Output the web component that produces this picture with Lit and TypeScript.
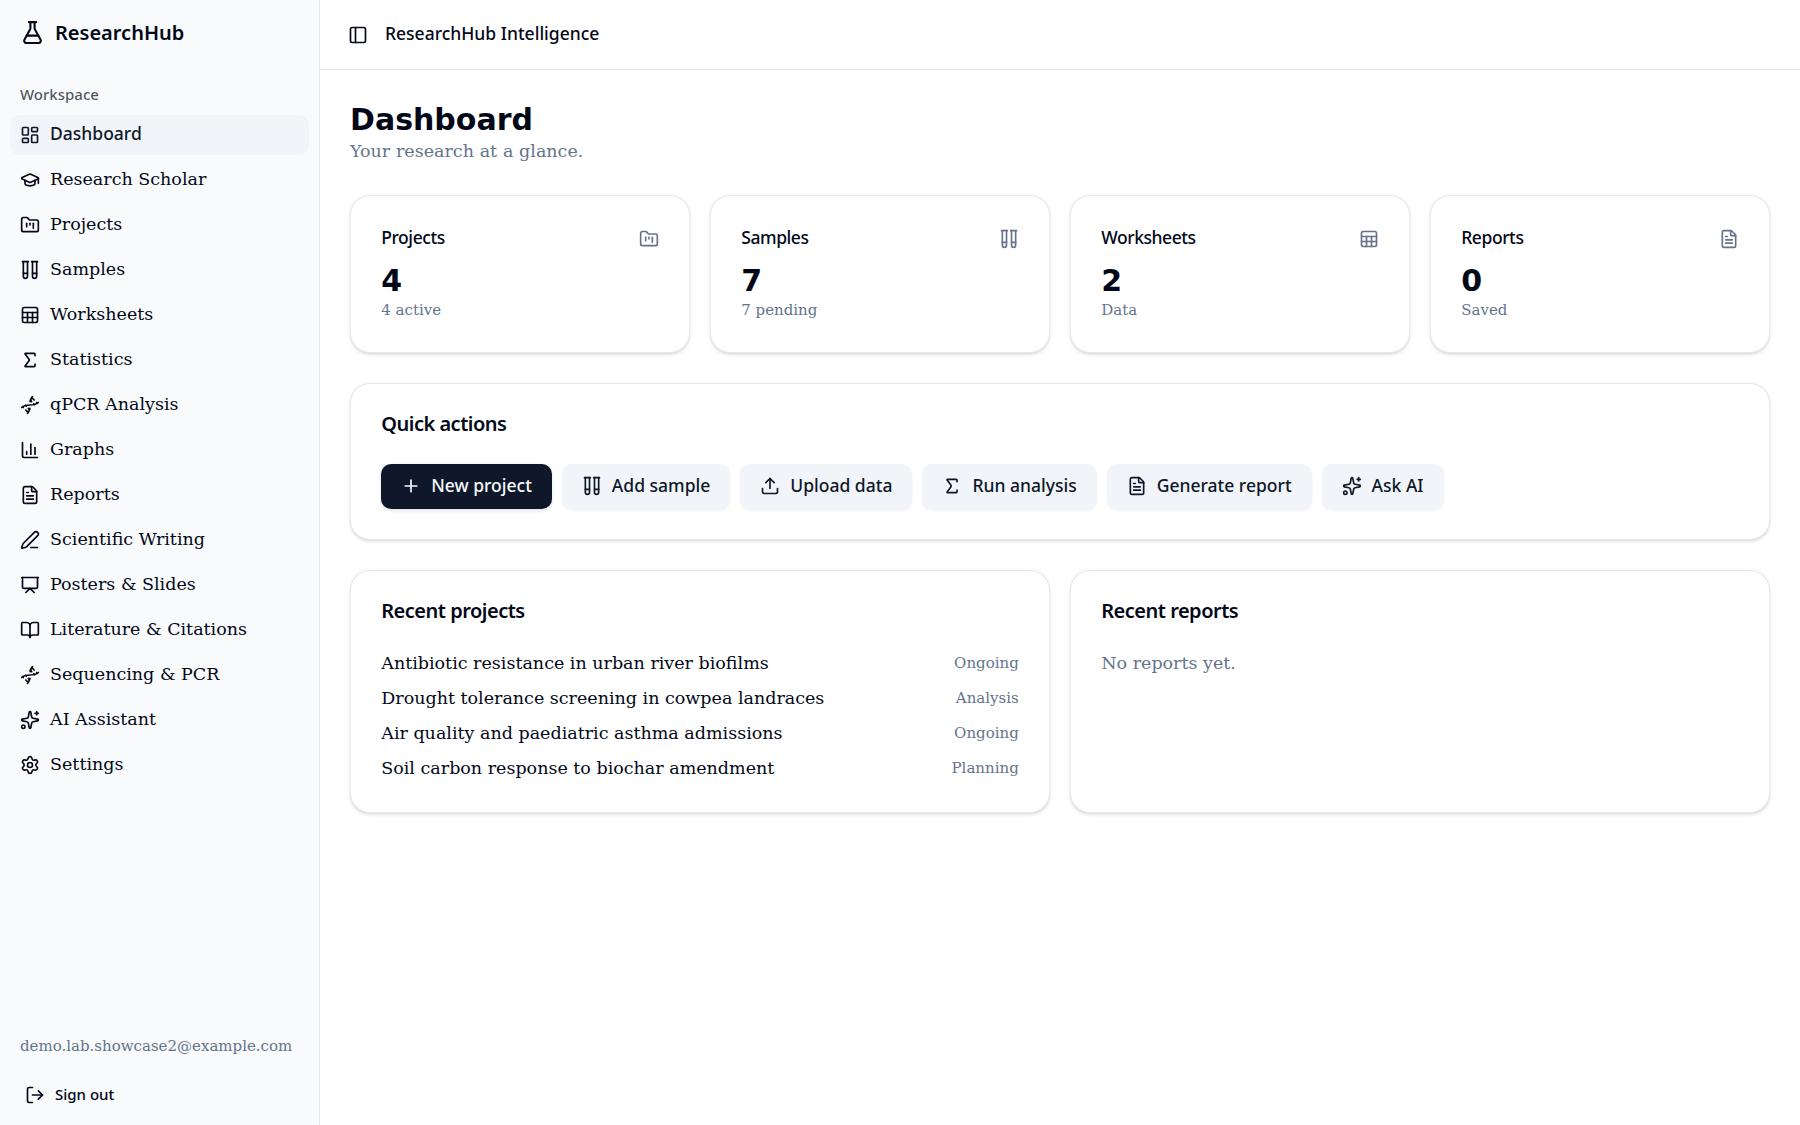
import { LitElement, html, css, svg } from "lit";
import { customElement, property } from "lit/decorators.js";

const p = (d: string) => svg`<path d=${d}></path>`;

const ICONS: Record<string, unknown> = {
  flask: [
    p("M14 2v6a2 2 0 0 0 .245.96l5.51 10.08A2 2 0 0 1 18 22H6a2 2 0 0 1-1.755-2.96l5.51-10.08A2 2 0 0 0 10 8V2"),
    p("M6.453 15h11.094"),
    p("M8.5 2h7"),
  ],
  dashboard: svg`<rect width="7" height="9" x="3" y="3" rx="1"></rect><rect width="7" height="5" x="14" y="3" rx="1"></rect><rect width="7" height="9" x="14" y="12" rx="1"></rect><rect width="7" height="5" x="3" y="16" rx="1"></rect>`,
  scholar: [
    p("M21.42 10.922a1 1 0 0 0-.019-1.838L12.83 5.18a2 2 0 0 0-1.66 0L2.6 9.08a1 1 0 0 0 0 1.832l8.57 3.908a2 2 0 0 0 1.66 0z"),
    p("M22 10v6"),
    p("M6 12.5V16a6 3 0 0 0 12 0v-3.5"),
  ],
  projects: [
    p("M4 20h16a2 2 0 0 0 2-2V8a2 2 0 0 0-2-2h-7.93a2 2 0 0 1-1.66-.9l-.82-1.2A2 2 0 0 0 7.93 3H4a2 2 0 0 0-2 2v13c0 1.1.9 2 2 2Z"),
    p("M8 10v4"),
    p("M12 10v2"),
    p("M16 10v6"),
  ],
  tubes: [
    p("M9 2v17.5A2.5 2.5 0 0 1 6.5 22A2.5 2.5 0 0 1 4 19.5V2"),
    p("M20 2v17.5a2.5 2.5 0 0 1-2.5 2.5a2.5 2.5 0 0 1-2.5-2.5V2"),
    p("M3 2h7"),
    p("M14 2h7"),
    p("M9 16H4"),
    p("M20 16h-5"),
  ],
  sheet: [
    svg`<rect width="18" height="18" x="3" y="3" rx="2"></rect>`,
    p("M3 9h18"),
    p("M3 15h18"),
    p("M9 9v12"),
    p("M15 9v12"),
  ],
  sigma: p("M18 7V5a1 1 0 0 0-1-1H6.5a.5.5 0 0 0-.4.8l4.5 6a2 2 0 0 1 0 2.4l-4.5 6a.5.5 0 0 0 .4.8H17a1 1 0 0 0 1-1v-2"),
  dna: [
    p("m10 16 1.5 1.5"),
    p("m14 8-1.5-1.5"),
    p("M15 2c-1.798 1.998-2.518 3.995-2.807 5.993"),
    p("m16.5 10.5 1 1"),
    p("m17 6-2.891-2.891"),
    p("M2 15c6.667-6 13.333 0 20-6"),
    p("m20 9 .891.891"),
    p("M3.109 14.109 4 15"),
    p("m6.5 12.5 1 1"),
    p("m7 18 2.891 2.891"),
    p("M9 22c1.798-1.998 2.518-3.995 2.807-5.993"),
  ],
  chart: [p("M3 3v16a2 2 0 0 0 2 2h16"), p("M18 17V9"), p("M13 17V5"), p("M8 17v-3")],
  file: [
    p("M6 22a2 2 0 0 1-2-2V4a2 2 0 0 1 2-2h8a2.4 2.4 0 0 1 1.704.706l3.588 3.588A2.4 2.4 0 0 1 20 8v12a2 2 0 0 1-2 2z"),
    p("M14 2v5a1 1 0 0 0 1 1h5"),
    p("M10 9H8"),
    p("M16 13H8"),
    p("M16 17H8"),
  ],
  pen: [
    p("M13 21h8"),
    p("M21.174 6.812a1 1 0 0 0-3.986-3.987L3.842 16.174a2 2 0 0 0-.5.83l-1.321 4.352a.5.5 0 0 0 .623.622l4.353-1.32a2 2 0 0 0 .83-.497z"),
  ],
  presentation: [p("M2 3h20"), p("M21 3v11a2 2 0 0 1-2 2H5a2 2 0 0 1-2-2V3"), p("m7 21 5-5 5 5")],
  book: [
    p("M12 7v14"),
    p("M3 18a1 1 0 0 1-1-1V4a1 1 0 0 1 1-1h5a4 4 0 0 1 4 4 4 4 0 0 1 4-4h5a1 1 0 0 1 1 1v13a1 1 0 0 1-1 1h-6a3 3 0 0 0-3 3 3 3 0 0 0-3-3z"),
  ],
  sparkles: [
    p("M11.017 2.814a1 1 0 0 1 1.966 0l1.051 5.558a2 2 0 0 0 1.594 1.594l5.558 1.051a1 1 0 0 1 0 1.966l-5.558 1.051a2 2 0 0 0-1.594 1.594l-1.051 5.558a1 1 0 0 1-1.966 0l-1.051-5.558a2 2 0 0 0-1.594-1.594l-5.558-1.051a1 1 0 0 1 0-1.966l5.558-1.051a2 2 0 0 0 1.594-1.594z"),
    p("M20 2v4"),
    p("M22 4h-4"),
    svg`<circle cx="4" cy="20" r="2"></circle>`,
  ],
  settings: [
    p("M9.671 4.136a2.34 2.34 0 0 1 4.659 0 2.34 2.34 0 0 0 3.319 1.915 2.34 2.34 0 0 1 2.33 4.033 2.34 2.34 0 0 0 0 3.831 2.34 2.34 0 0 1-2.33 4.033 2.34 2.34 0 0 0-3.319 1.915 2.34 2.34 0 0 1-4.659 0 2.34 2.34 0 0 0-3.32-1.915 2.34 2.34 0 0 1-2.33-4.033 2.34 2.34 0 0 0 0-3.831A2.34 2.34 0 0 1 6.35 6.051a2.34 2.34 0 0 0 3.319-1.915"),
    svg`<circle cx="12" cy="12" r="3"></circle>`,
  ],
  logout: [p("m16 17 5-5-5-5"), p("M21 12H9"), p("M9 21H5a2 2 0 0 1-2-2V5a2 2 0 0 1 2-2h4")],
  panel: [svg`<rect width="18" height="18" x="3" y="3" rx="2"></rect>`, p("M9 3v18")],
  plus: [p("M5 12h14"), p("M12 5v14")],
  upload: [p("M12 3v12"), p("m17 8-5-5-5 5"), p("M21 15v4a2 2 0 0 1-2 2H5a2 2 0 0 1-2-2v-4")],
};

@customElement("ui-icon")
class UiIcon extends LitElement {
  @property() name = "";
  static styles = css`
    :host {
      display: block;
      flex: none;
      width: 20px;
      height: 20px;
    }
    svg {
      display: block;
      width: 100%;
      height: 100%;
      fill: none;
      stroke: currentColor;
      stroke-width: 2;
      stroke-linecap: round;
      stroke-linejoin: round;
    }
  `;
  render() {
    return html`<svg viewBox="0 0 24 24" aria-hidden="true">${ICONS[this.name]}</svg>`;
  }
}

const NAV = [
  ["dashboard", "Dashboard"],
  ["scholar", "Research Scholar"],
  ["projects", "Projects"],
  ["tubes", "Samples"],
  ["sheet", "Worksheets"],
  ["sigma", "Statistics"],
  ["dna", "qPCR Analysis"],
  ["chart", "Graphs"],
  ["file", "Reports"],
  ["pen", "Scientific Writing"],
  ["presentation", "Posters & Slides"],
  ["book", "Literature & Citations"],
  ["dna", "Sequencing & PCR"],
  ["sparkles", "AI Assistant"],
  ["settings", "Settings"],
];

const STATS = [
  ["Projects", "projects", "4", "4 active"],
  ["Samples", "tubes", "7", "7 pending"],
  ["Worksheets", "sheet", "2", "Data"],
  ["Reports", "file", "0", "Saved"],
];

const ACTIONS = [
  ["plus", "New project"],
  ["tubes", "Add sample"],
  ["upload", "Upload data"],
  ["sigma", "Run analysis"],
  ["file", "Generate report"],
  ["sparkles", "Ask AI"],
];

const PROJECTS = [
  ["Antibiotic resistance in urban river biofilms", "Ongoing"],
  ["Drought tolerance screening in cowpea landraces", "Analysis"],
  ["Air quality and paediatric asthma admissions", "Ongoing"],
  ["Soil carbon response to biochar amendment", "Planning"],
];

@customElement("app-root")
class AppRoot extends LitElement {
  static styles = css`
    :host {
      --ui: "Noto Sans", sans-serif;
      --muted: #64748b;
      --line: #e2e8f0;
      display: flex;
      height: 1125px;
      background: #fff;
      color: #020817;
      font: 17.5px/25px "DejaVu Serif", serif;
    }
    * {
      box-sizing: border-box;
    }
    h1,
    h2,
    h3,
    p,
    ul {
      margin: 0;
      padding: 0;
      list-style: none;
    }
    button {
      border: 0;
      color: inherit;
      background: none;
      white-space: nowrap;
    }
    /* Optical centring: labels sit one pixel above the middle of their row. */
    .label {
      margin-top: -2px;
    }
    .sidebar {
      display: flex;
      flex-direction: column;
      flex: none;
      width: 320px;
      padding: 10px;
      background: #f8fafc;
      border-right: 1px solid var(--line);
    }
    .brand {
      display: flex;
      align-items: center;
      gap: 10px;
      height: 45px;
      padding: 0 10px;
      font: 600 20px/30px var(--ui);
    }
    .brand ui-icon {
      width: 25px;
      height: 25px;
    }
    .group {
      height: 40px;
      margin-top: 20px;
      padding: 0 10px;
      font: 500 15px/38px var(--ui);
      color: #020817b3;
    }
    .nav {
      display: flex;
      flex-direction: column;
      gap: 5px;
      flex: 1;
    }
    .item {
      display: flex;
      align-items: center;
      gap: 10px;
      height: 40px;
      padding: 0 10px;
      border-radius: 10px;
    }
    .item.active {
      background: #f1f5f9;
      color: #0f172a;
      font-family: var(--ui);
      font-weight: 500;
    }
    .item.active .label {
      margin-top: -4px;
    }
    .email {
      padding: 0 10px;
      margin-bottom: 19px;
      font-size: 15px;
      line-height: 20px;
      color: var(--muted);
    }
    .signout {
      display: flex;
      align-items: center;
      gap: 10px;
      height: 40px;
      padding: 0 15px;
      font: 500 15px/20px var(--ui);
    }
    .page {
      flex: 1;
      min-width: 0;
    }
    .topbar {
      display: flex;
      align-items: center;
      gap: 17.5px;
      height: 70px;
      padding: 0 27.5px;
      border-bottom: 1px solid var(--line);
      font: 500 17.5px/25px var(--ui);
    }
    .main {
      display: flex;
      flex-direction: column;
      gap: 30px;
      padding: 30px;
    }
    h1 {
      font: 700 30px/40px "DejaVu Sans", sans-serif;
    }
    .muted {
      color: var(--muted);
    }
    .lead {
      margin: -1px 0 1px;
      word-spacing: 0.2px;
    }
    .small {
      font-size: 15px;
      line-height: 20px;
      color: var(--muted);
    }
    .note {
      margin: -1px 0 1px;
    }
    .stats {
      display: grid;
      grid-template-columns: repeat(4, 1fr);
      gap: 20px;
    }
    .halves {
      display: grid;
      grid-template-columns: 1fr 1fr;
      gap: 20px;
    }
    .card {
      padding: 30.25px;
      background: #fff;
      border: 1px solid var(--line);
      border-radius: 20px;
      box-shadow: 0 1.25px 3.75px #0000001a, 0 1.25px 2.5px -1.25px #0000001a;
    }
    .stat-head {
      display: flex;
      align-items: center;
      justify-content: space-between;
      height: 25px;
      margin-bottom: 10px;
      font: 500 17.5px/25px var(--ui);
      letter-spacing: -0.025em;
    }
    .stat-head ui-icon {
      color: var(--muted);
    }
    .value {
      font: 700 30px/40px "DejaVu Sans", sans-serif;
    }
    h2 {
      font: 600 20px/20px var(--ui);
      letter-spacing: -0.025em;
      margin-bottom: 30px;
    }
    .actions {
      display: flex;
      gap: 10px;
    }
    .action {
      display: flex;
      align-items: center;
      gap: 10px;
      height: 45px;
      padding: 0 20px;
      border-radius: 10px;
      background: #f1f5f9;
      color: #0f172a;
      font: 500 17.5px/25px var(--ui);
      box-shadow: 0 1.25px 2.5px #0000000d;
    }
    .action.primary {
      background: #0f172a;
      color: #f8fafc;
      box-shadow: 0 1.25px 3.75px #0000001a;
    }
    .list {
      display: flex;
      flex-direction: column;
      gap: 10px;
    }
    .row {
      display: flex;
      align-items: center;
      justify-content: space-between;
    }
  `;

  render() {
    return html`
      <aside class="sidebar">
        <div class="brand"><ui-icon name="flask"></ui-icon>ResearchHub</div>
        <div class="group">Workspace</div>
        <nav class="nav">
          ${NAV.map(
            ([icon, label], i) =>
              html`<a class="item ${i === 0 ? "active" : ""}"
                ><ui-icon name=${icon}></ui-icon><span class="label">${label}</span></a
              >`
          )}
        </nav>
        <div class="email">demo.lab.showcase2@example.com</div>
        <button class="signout"><ui-icon name="logout"></ui-icon><span class="label">Sign out</span></button>
      </aside>
      <div class="page">
        <header class="topbar">
          <ui-icon name="panel"></ui-icon><span class="label">ResearchHub Intelligence</span>
        </header>
        <main class="main">
          <div>
            <h1>Dashboard</h1>
            <p class="muted lead">Your research at a glance.</p>
          </div>
          <section class="stats">
            ${STATS.map(
              ([title, icon, value, note]) => html`<div class="card">
                <div class="stat-head"><span class="label">${title}</span><ui-icon name=${icon}></ui-icon></div>
                <div class="value">${value}</div>
                <p class="small note">${note}</p>
              </div>`
            )}
          </section>
          <section class="card">
            <h2>Quick actions</h2>
            <div class="actions">
              ${ACTIONS.map(
                ([icon, label], i) =>
                  html`<button class="action ${i === 0 ? "primary" : ""}">
                    <ui-icon name=${icon}></ui-icon><span class="label">${label}</span>
                  </button>`
              )}
            </div>
          </section>
          <section class="halves">
            <div class="card">
              <h2>Recent projects</h2>
              <ul class="list">
                ${PROJECTS.map(
                  ([name, status]) =>
                    html`<li class="row"><span>${name}</span><span class="small label">${status}</span></li>`
                )}
              </ul>
            </div>
            <div class="card">
              <h2>Recent reports</h2>
              <p class="muted">No reports yet.</p>
            </div>
          </section>
        </main>
      </div>
    `;
  }
}
